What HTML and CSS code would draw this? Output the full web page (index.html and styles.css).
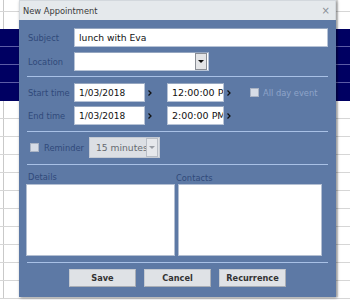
FILE: index.html
```html
<!DOCTYPE html>
<html>
<head>
<meta charset="utf-8">
<link rel="stylesheet" href="styles.css">
</head>
<body>
<div class="cal">
  <div class="cal-row first"></div>
  <div class="cal-row second"></div>
  <div class="cal-row navy"></div>
  <div class="cal-row navy"></div>
  <div class="cal-row navy"></div>
  <div class="cal-row navy last-navy"></div>
  <div class="cal-row"></div>
  <div class="cal-row"></div>
  <div class="cal-row"></div>
  <div class="cal-row"></div>
  <div class="cal-row"></div>
  <div class="cal-row"></div>
  <div class="cal-row"></div>
  <div class="cal-row"></div>
  <div class="cal-row"></div>
  <div class="cal-row"></div>
  <div class="cal-row"></div>
</div>

<div class="dialog">
  <div class="titlebar">
    <span class="title">New Appointment</span>
    <span class="close">×</span>
  </div>
  <div class="body">
    <div class="row subject-row">
      <span class="label">Subject</span>
      <div class="field fill">lunch with Eva</div>
    </div>
    <div class="row location-row">
      <span class="label">Location</span>
      <div class="field select location">
        <span class="select-text"></span>
        <span class="drop"><span class="tri"></span></span>
      </div>
    </div>
    <div class="sep sep-1"></div>
    <div class="row time-row start-row">
      <span class="label">Start time</span>
      <div class="field date">1/03/2018</div>
      <span class="chev first-chev"><svg width="4" height="6" viewBox="0 0 4 6"><path d="M0.5 0.5 L3 3 L0.5 5.5" fill="none" stroke="#111" stroke-width="1.3"/></svg></span>
      <div class="field time">12:00:00 PM</div>
      <span class="chev second-chev"><svg width="4" height="6" viewBox="0 0 4 6"><path d="M0.5 0.5 L3 3 L0.5 5.5" fill="none" stroke="#111" stroke-width="1.3"/></svg></span>
      <span class="check"></span>
      <span class="label light allday">All day event</span>
    </div>
    <div class="row time-row end-row">
      <span class="label">End time</span>
      <div class="field date">1/03/2018</div>
      <span class="chev first-chev"><svg width="4" height="6" viewBox="0 0 4 6"><path d="M0.5 0.5 L3 3 L0.5 5.5" fill="none" stroke="#111" stroke-width="1.3"/></svg></span>
      <div class="field time">2:00:00 PM</div>
      <span class="chev second-chev"><svg width="4" height="6" viewBox="0 0 4 6"><path d="M0.5 0.5 L3 3 L0.5 5.5" fill="none" stroke="#111" stroke-width="1.3"/></svg></span>
    </div>
    <div class="sep sep-2"></div>
    <div class="row reminder-row">
      <span class="check rem-check"></span>
      <span class="label rem-label">Reminder</span>
      <div class="field select disabled reminder">
        <span class="select-text">15 minutes</span>
        <span class="drop"><span class="tri"></span></span>
      </div>
    </div>
    <div class="sep sep-3"></div>
    <div class="notes">
      <div class="col details">
        <span class="label notes-label">Details</span>
        <div class="area"></div>
      </div>
      <div class="col contacts">
        <span class="label notes-label contacts-label">Contacts</span>
        <div class="area"></div>
      </div>
    </div>
    <div class="sep sep-4"></div>
    <div class="buttons">
      <span class="btn">Save</span>
      <span class="btn">Cancel</span>
      <span class="btn">Recurrence</span>
    </div>
  </div>
</div>
</body>
</html>
```

FILE: styles.css
```css
html, body {
  margin: 0;
  padding: 0;
}
body {
  width: 350px;
  height: 300px;
  overflow: hidden;
  position: relative;
  background: #ffffff;
  font-family: "DejaVu Sans", Verdana, sans-serif;
}

/* background calendar grid */
.cal {
  display: flex;
  flex-direction: column;
  background: linear-gradient(to right, transparent 3px, #c9c9c9 3px, #c9c9c9 4px, transparent 4px);
}
.cal-row {
  box-sizing: border-box;
  height: 18px;
  flex: none;
  border-bottom: 1px solid #d6d6d6;
}
.cal-row.first {
  height: 12px;
}
.cal-row.second {
  height: 17px;
  border-bottom: none;
}
.cal-row.navy {
  background: #000062;
  border-bottom: 1px solid #5c5ca6;
}
.cal-row.last-navy {
  border-bottom: 1px solid #000062;
}

/* dialog */
.dialog {
  position: absolute;
  left: 19px;
  top: 0;
  width: 317px;
  height: 297px;
  display: flex;
  flex-direction: column;
  box-shadow: 1px 1px 3px rgba(0, 0, 0, 0.4), 2px 0 1px rgba(0, 0, 0, 0.12);
}
.titlebar {
  height: 20px;
  flex: none;
  box-sizing: border-box;
  background: #e5e9ec;
  border: 1px solid #d3d8dd;
  border-bottom: none;
  display: flex;
  align-items: center;
  justify-content: space-between;
  padding: 0 5px 0 3px;
  font-size: 8.3px;
  color: #3a3a3a;
}
.close {
  font-size: 10px;
  color: #8a8f96;
}
.body {
  flex: 1;
  background: #5d79a5;
  padding: 8px 8px 0 9px;
  display: flex;
  flex-direction: column;
}

.row {
  display: flex;
  align-items: center;
  flex: none;
}
.label {
  font-size: 8.3px;
  color: #30497a;
  white-space: nowrap;
}
.row > .label:first-child {
  width: 46px;
  flex: none;
}
.label.light {
  color: #8ea4c9;
}

.field {
  box-sizing: border-box;
  height: 19px;
  background: #ffffff;
  border: 1px solid #b7c3d6;
  border-top-color: #95a6c0;
  font-size: 9px;
  color: #111;
  padding: 0 0 0 4px;
  display: flex;
  align-items: center;
  white-space: nowrap;
  overflow: hidden;
}
.fill {
  flex: 1;
  font-size: 9.2px;
}
.location-row {
  margin-top: 5px;
}
.select {
  position: relative;
  justify-content: space-between;
  padding-right: 1px;
}
.location {
  width: 135px;
}
.drop {
  box-sizing: border-box;
  width: 12px;
  height: 17px;
  flex: none;
  background: #e4e5e7;
  border: 1px solid #8b8f96;
  display: flex;
  align-items: center;
  justify-content: center;
}
.tri {
  width: 0;
  height: 0;
  border-left: 3px solid transparent;
  border-right: 3px solid transparent;
  border-top: 3px solid #111;
}

.sep {
  flex: none;
  height: 1px;
  background: #a9c1e6;
  margin-left: -1px;
}
.sep-1 { margin-top: 5px; }
.start-row { margin-top: 6px; }
.end-row { margin-top: 4px; }
.sep-2 { margin-top: 6px; }
.reminder-row { margin-top: 5px; }
.sep-3 { margin-top: 6px; }
.sep-4 { margin-top: 6px; }

.date {
  width: 71px;
}
.time {
  width: 57px;
  font-size: 9.5px;
}
.chev {
  display: flex;
  align-items: center;
  flex: none;
  padding-left: 3px;
}
.first-chev {
  width: 22px;
  box-sizing: border-box;
}
.second-chev {
  width: 26px;
  box-sizing: border-box;
}
.check {
  box-sizing: border-box;
  width: 9px;
  height: 9px;
  flex: none;
  background: #d6dce6;
  border: 1px solid #a9b3c4;
}
.allday {
  margin-left: 4px;
}

.rem-check {
  margin-left: 2px;
}
.rem-label {
  margin-left: 5px;
  margin-right: 5px;
}
.reminder {
  width: 71px;
  height: 21px;
  background: #dcdfe4;
  border-color: #c4cad4;
  color: #666a70;
  padding-left: 6px;
  font-size: 9.2px;
}
.reminder .select-text {
  overflow: hidden;
  flex: 1;
}
.reminder .drop {
  height: 19px;
  background: #e6e8ec;
  border-color: #b9bec6;
}
.reminder .tri {
  border-top-color: #9a9ea5;
}

.notes {
  display: flex;
  flex: none;
  margin-left: -2px;
  margin-top: 6px;
}
.col {
  display: flex;
  flex-direction: column;
}
.details {
  width: 149px;
}
.contacts {
  margin-left: 1px;
}
.notes-label {
  line-height: 12px;
  padding-left: 2px;
  margin-bottom: 1px;
}
.contacts-label {
  padding-left: 0;
  margin-top: 1px;
  margin-bottom: 0;
}
.area {
  box-sizing: border-box;
  height: 72px;
  background: #ffffff;
  border: 1px solid #b3bfd2;
}
.details .area {
  width: 149px;
}
.contacts .area {
  width: 144px;
  margin-left: 2px;
}

.buttons {
  display: flex;
  justify-content: center;
  gap: 8px;
  margin-top: 6px;
  margin-left: -1px;
}
.btn {
  box-sizing: border-box;
  width: 67px;
  height: 18px;
  background: #dfe2e6;
  border: 1px solid #c5cad1;
  border-right-color: #a9aeb6;
  border-bottom-color: #a9aeb6;
  font-size: 8.2px;
  font-weight: bold;
  color: #333;
  display: flex;
  align-items: center;
  justify-content: center;
}
```
